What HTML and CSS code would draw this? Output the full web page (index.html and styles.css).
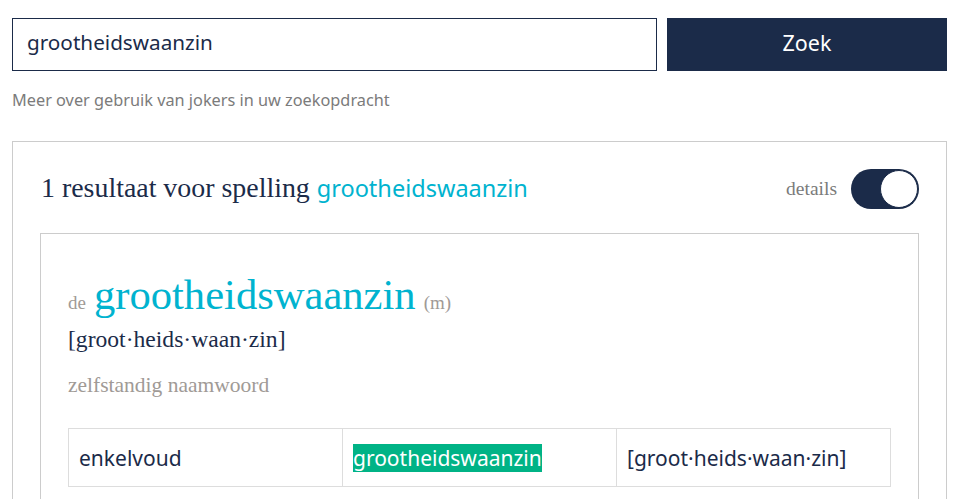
FILE: index.html
```html
<!DOCTYPE html>
<html lang="nl">
<head>
    <meta charset="UTF-8">
    <meta name="viewport" content="width=device-width, initial-scale=1.0">
    <title>Spelling zoeken</title>
    <link rel="stylesheet" href="styles.css">
</head>
<body>
    <form class="search">
        <input type="text" class="search-input" value="grootheidswaanzin">
        <button type="button" class="search-button">Zoek</button>
    </form>
    <a class="help-link" href="#">Meer over gebruik van jokers in uw zoekopdracht</a>

    <div class="results">
        <div class="results-head">
            <h2>1 resultaat voor spelling <span class="query">grootheidswaanzin</span></h2>
            <div class="details">
                <span>details</span>
                <span class="toggle"><span class="knob"></span></span>
            </div>
        </div>

        <div class="entry">
            <div class="lemma">
                <span class="article">de</span>
                <span class="word">grootheidswaanzin</span>
                <span class="gender">(m)</span>
            </div>
            <div class="syllables">[groot·heids·waan·zin]</div>
            <div class="pos">zelfstandig naamwoord</div>

            <table class="forms">
                <tr>
                    <td>enkelvoud</td>
                    <td><mark>grootheidswaanzin</mark></td>
                    <td>[groot·heids·waan·zin]</td>
                </tr>
            </table>
        </div>
    </div>
</body>
</html>
```

FILE: styles.css
```css
body {
    margin: 0;
    padding: 18px 27px 0 12px;
    font-family: "Noto Sans", "Open Sans", sans-serif;
    color: #1b2b49;
    background: #fff;
}
.search {
    display: flex;
    gap: 10px;
    margin: 0;
}
.search-input {
    flex: 1;
    height: 53px;
    box-sizing: border-box;
    border: 1px solid #1b2b49;
    padding: 0 14px 5px;
    font-family: inherit;
    font-size: 20.7px;
    color: #1b2b49;
    outline: none;
}
.search-button {
    width: 280px;
    height: 53px;
    border: none;
    padding: 0 0 5px;
    background: #1b2b49;
    color: #fff;
    font-family: inherit;
    font-size: 21.5px;
}
.help-link {
    display: block;
    margin-top: 18px;
    font-size: 16.3px;
    color: #7b7b7b;
    text-decoration: none;
}
.results {
    margin-top: 30px;
    border: 1px solid #ccc;
    border-bottom: none;
    padding: 0 27px 0 27px;
    height: 400px;
}
.results-head {
    display: flex;
    justify-content: space-between;
    align-items: center;
    height: 91px;
}
.results-head h2 {
    margin: 0 0 0 1px;
    font-family: "Liberation Serif", serif;
    font-weight: normal;
    font-size: 27.9px;
    color: #1b2b49;
}
.query {
    font-family: "Noto Sans", sans-serif;
    font-size: 23.5px;
    color: #00b3cf;
}
.details {
    display: flex;
    align-items: center;
    gap: 14px;
    font-family: "Liberation Serif", serif;
    font-size: 19.5px;
    color: #7b7b7b;
    margin-top: 3px;
}
.toggle {
    display: flex;
    justify-content: flex-end;
    width: 68px;
    height: 40px;
    box-sizing: border-box;
    border-radius: 20px;
    background: #1b2b49;
    padding: 1px;
}
.knob {
    width: 38px;
    height: 38px;
    box-sizing: border-box;
    border-radius: 50%;
    background: #fff;
    border: 1px solid #1b2b49;
}
.entry {
    border: 1px solid #ccc;
    border-bottom: none;
    padding: 36px 27px 0 27px;
    height: 300px;
}
.lemma {
    display: flex;
    align-items: baseline;
    gap: 8px;
    font-family: "Liberation Serif", serif;
}
.article,
.gender {
    font-size: 19px;
    color: #a09a96;
}
.word {
    font-size: 42.6px;
    color: #00b3cf;
}
.syllables {
    margin-top: 7px;
    font-family: "Liberation Serif", serif;
    font-size: 23.6px;
    color: #1b2b49;
}
.pos {
    margin-top: 20px;
    font-family: "Liberation Serif", serif;
    font-size: 21.5px;
    color: #a09a96;
}
.forms {
    margin-top: 30px;
    width: 100%;
    border-collapse: collapse;
    table-layout: fixed;
}
.forms td {
    border: 1px solid #ddd;
    height: 57px;
    padding: 0 10px;
    font-size: 21px;
    color: #1b2b49;
}
.forms mark {
    background: #00b386;
    color: #fff;
}
```
